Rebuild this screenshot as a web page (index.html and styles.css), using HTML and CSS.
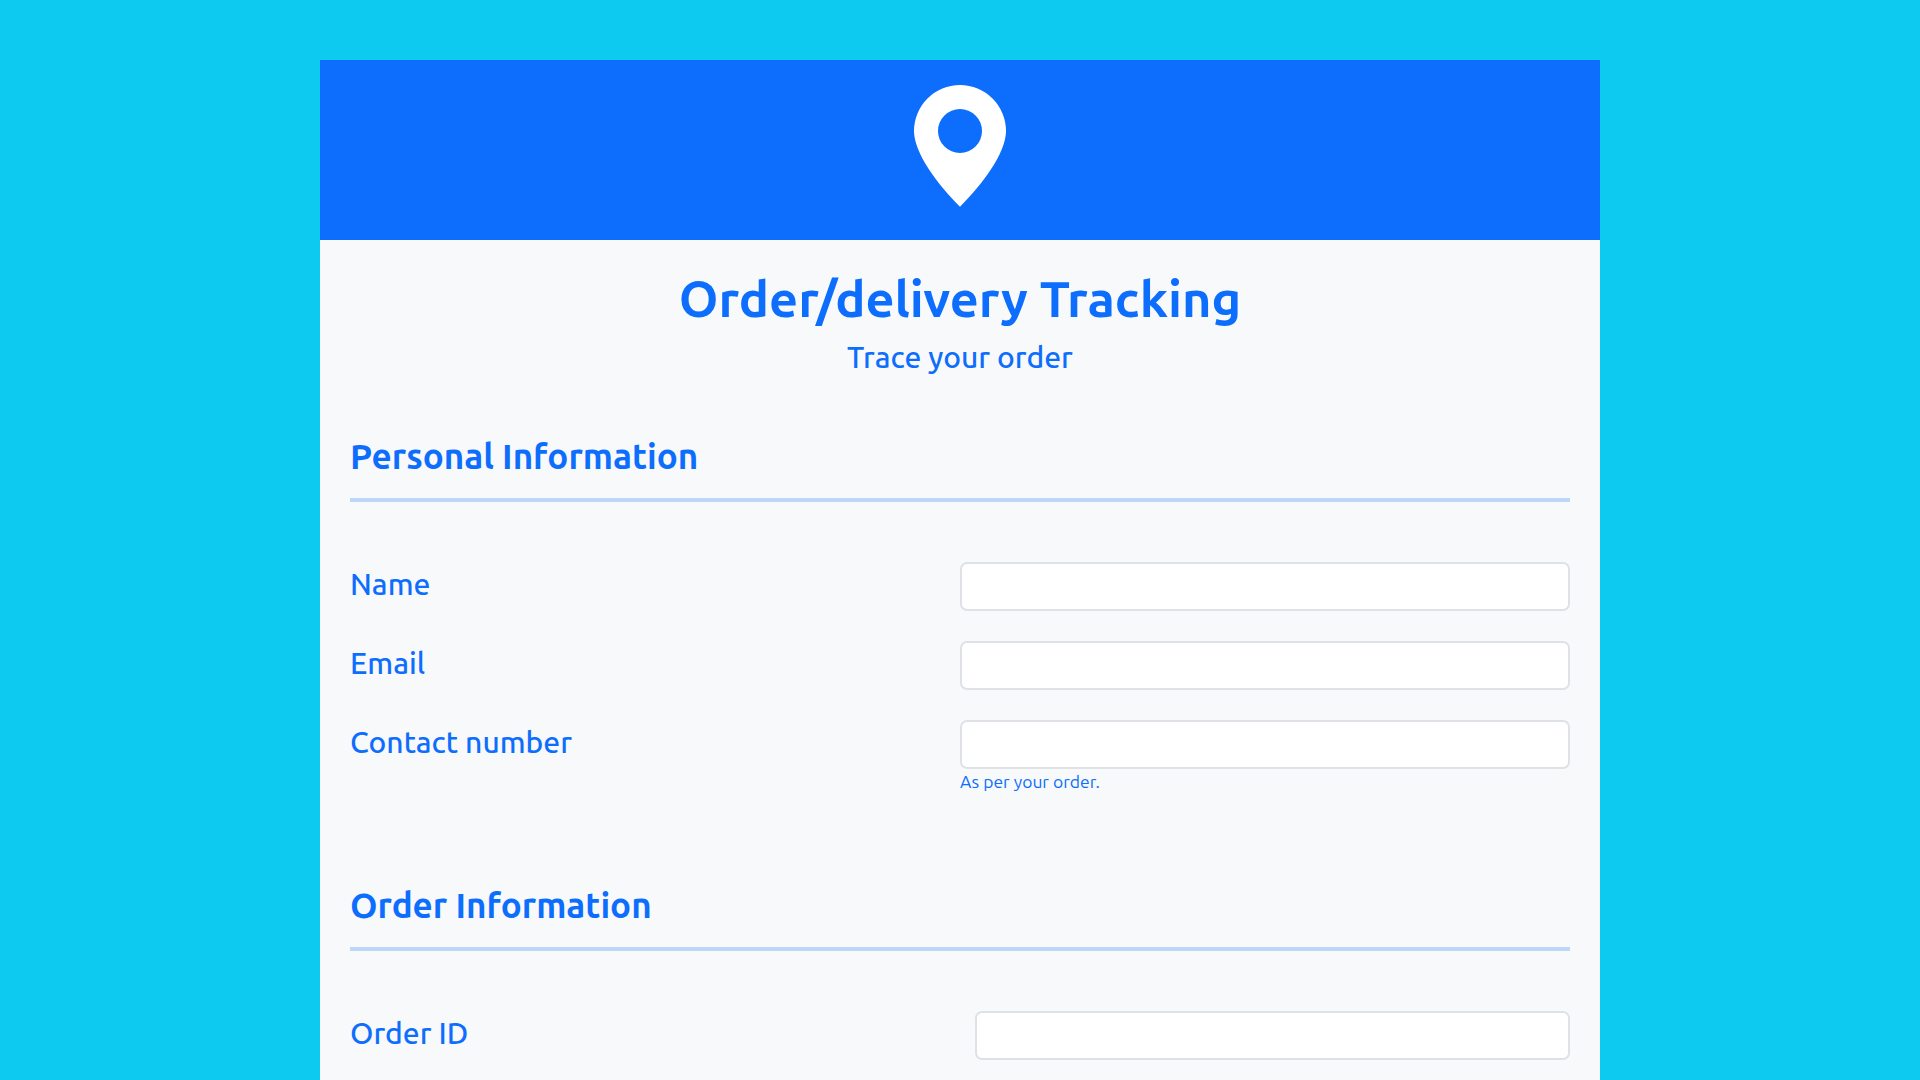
FILE: index.html
```html
<!DOCTYPE html>
<html lang="en">
<head>
<meta charset="utf-8">
<title>Order/delivery Tracking</title>
<link rel="stylesheet" href="styles.css">
</head>
<body>
<main class="card">
  <header class="banner">
    <svg class="pin" viewBox="0 0 92 122" aria-hidden="true"><path fill="#fff" fill-rule="evenodd" d="M46 0A46 46 0 0 0 0 46C0 68 24 100 46 121.7C68 100 92 68 92 46A46 46 0 0 0 46 0ZM46 24A22 22 0 1 1 46 68A22 22 0 1 1 46 24Z"/></svg>
  </header>
  <form class="content">
    <h1 class="title">Order/delivery Tracking</h1>
    <p class="subtitle">Trace your order</p>
    <section class="group">
      <h2 class="heading">Personal Information</h2>
      <hr class="rule">
      <div class="row"><label class="label" for="name">Name</label><input class="field" id="name" type="text"></div>
      <div class="row"><label class="label" for="email">Email</label><input class="field" id="email" type="email"></div>
      <div class="row"><label class="label" for="contact">Contact number</label><div><input class="field" id="contact" type="tel"><small class="help">As per your order.</small></div></div>
    </section>
    <section class="group group-order">
      <h2 class="heading">Order Information</h2>
      <hr class="rule">
      <div class="row row-order"><label class="label" for="order">Order ID</label><input class="field" id="order" type="text"></div>
    </section>
  </form>
</main>
</body>
</html>
```
FILE: styles.css
```css
* { box-sizing: border-box; }
body {
  margin: 0;
  height: 1080px;
  overflow: hidden;
  padding-top: 60px;
  background: #0dcaf0;
  color: #0d6efd;
  font-family: Ubuntu, "Noto Sans", sans-serif;
}
.card { width: 1280px; height: 1020px; margin: 0 auto; background: #f8f9fa; overflow: hidden; }
.banner { height: 180px; padding-top: 25px; background: #0d6efd; }
.pin { width: 92px; height: 122px; display: block; margin: 0 auto; }
.content { padding: 29px 30px 0; }
.title { margin: 0; height: 60px; font-size: 50.5px; line-height: 60px; font-weight: 700; text-align: center; white-space: nowrap; }
.subtitle { margin: 8px 0 0; height: 40px; font-size: 30px; line-height: 40px; font-weight: 500; text-align: center; }
.group { padding-top: 58px; }
.heading { margin: 0; height: 42px; font-size: 35px; line-height: 42px; font-weight: 600; white-space: nowrap; }
.rule { height: 4px; margin: 21px 0 60px; border: 0; background: #0d6efd; opacity: .25; }
.row { display: grid; grid-template-columns: 610px 1fr; margin-bottom: 30px; }
.row-order { grid-template-columns: 625px 1fr; }
.label { font-size: 30px; line-height: 45px; height: 49px; font-weight: 500; }
.field { display: block; width: 100%; height: 49px; padding: 6px 12px; border: 2px solid #dee2e6; border-radius: 7px; background: #fff; }
.help { display: block; height: 26px; font-size: 17.5px; line-height: 26px; font-weight: 400; }
.group-order { padding-top: 59px; }
```
